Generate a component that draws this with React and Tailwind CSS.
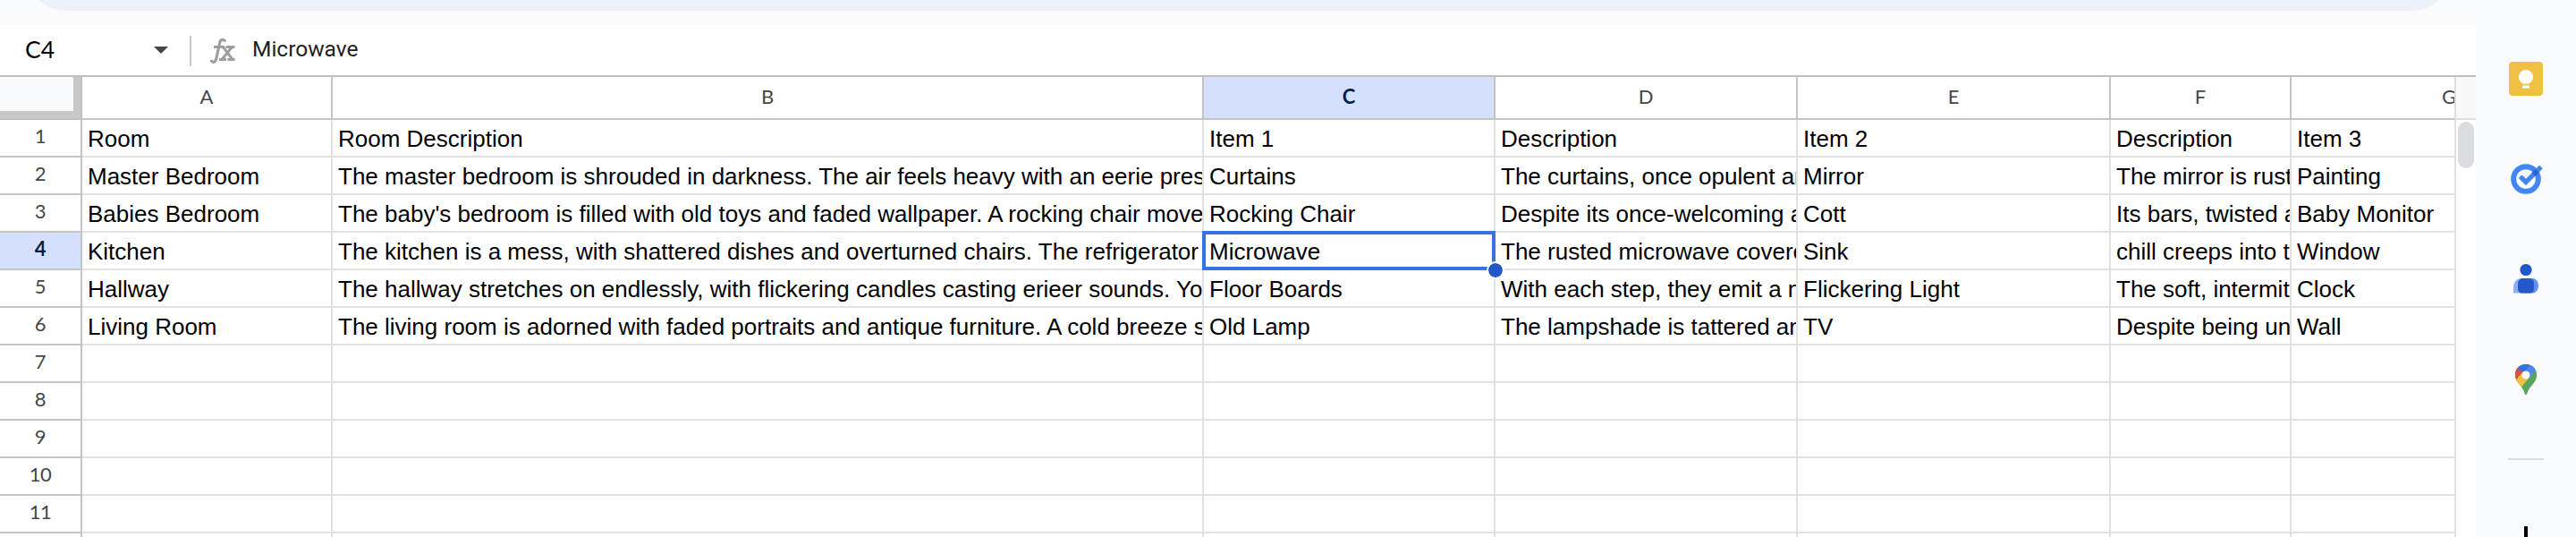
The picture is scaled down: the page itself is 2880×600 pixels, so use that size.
const columns = [
  { id: 'A', width: 'w-[280px]' },
  { id: 'B', width: 'w-[974px]' },
  { id: 'C', width: 'w-[326px]' },
  { id: 'D', width: 'w-[338px]' },
  { id: 'E', width: 'w-[350px]' },
  { id: 'F', width: 'w-[202px]' },
  { id: 'G', width: 'w-[182px]' },
];

const rows = [
  ['Room', 'Room Description', 'Item 1', 'Description', 'Item 2', 'Description', 'Item 3'],
  ['Master Bedroom', 'The master bedroom is shrouded in darkness. The air feels heavy with an eerie pres', 'Curtains', 'The curtains, once opulent an', 'Mirror', 'The mirror is rust', 'Painting'],
  ['Babies Bedroom', "The baby's bedroom is filled with old toys and faded wallpaper. A rocking chair move", 'Rocking Chair', 'Despite its once-welcoming a', 'Cott', 'Its bars, twisted a', 'Baby Monitor'],
  ['Kitchen', 'The kitchen is a mess, with shattered dishes and overturned chairs. The refrigerator', 'Microwave', 'The rusted microwave covere', 'Sink', 'chill creeps into t', 'Window'],
  ['Hallway', 'The hallway stretches on endlessly, with flickering candles casting erieer sounds. Yo', 'Floor Boards', 'With each step, they emit a n', 'Flickering Light', 'The soft, intermit', 'Clock'],
  ['Living Room', 'The living room is adorned with faded portraits and antique furniture. A cold breeze s', 'Old Lamp', 'The lampshade is tattered an', 'TV', 'Despite being un', 'Wall'],
  [], [], [], [], [], [],
];

function Cell({ col, text, selected }) {
  const edge = col.id === 'G' ? '' : 'border-r-2';
  return (
    <div className={`${col.width} ${edge} relative h-[42px] shrink-0 border-b-2 border-[#e1e1e1]`}>
      <div className="h-full overflow-hidden whitespace-pre pl-[6px] pt-[6px] text-[26px] leading-[30px]">{text}</div>
      {selected && (
        <>
          <div className="absolute -left-[2px] -top-[2px] z-10 h-[44px] w-[328px] border-4 border-[#3871e0]" />
          <div className="absolute left-[318px] top-[34px] z-20 size-4 rounded-full bg-[#2456cb] outline-2 outline-white" />
        </>
      )}
    </div>
  );
}

function KeepIcon() {
  return (
    <svg className="size-[38px] shrink-0" viewBox="0 0 38 38">
      <rect width="38" height="38" rx="4" fill="#f1bf42" />
      <circle cx="19" cy="17" r="8" fill="#fff" />
      <path d="M15 22h8v2h-8zM15 26.500h8v3.200h-8z" fill="#fff" />
    </svg>
  );
}

function TasksIcon() {
  return (
    <svg className="size-[40px] shrink-0" viewBox="0 0 40 40">
      <circle cx="20" cy="20" r="13.800" fill="none" stroke="#4285f4" strokeWidth="6" />
      <path d="M13.200 19l2.200-2.200L20 21.200 35.200 6l2.200 2.200L20 25.800z" fill="#4285f4" stroke="#4285f4" strokeWidth="2" strokeLinejoin="round" />
      <path d="M26.700 13l4.200-4.100 3.700 4.100-4.200 4.100z" fill="#2a63cf" />
    </svg>
  );
}

function ContactsIcon() {
  return (
    <svg className="size-[40px] shrink-0" viewBox="0 0 40 40">
      <circle cx="20" cy="10.500" r="6.600" fill="#2458c9" />
      <path d="M7 36.500a1 1 0 0 1-1-1V30c0-6 4-10 9-10h8v16.500z" fill="#8fadf8" />
      <path d="M18 20h9c4 0 7 3.500 7 8.200s-3 8.300-7 8.300h-9z" fill="#6690f7" />
      <path d="M17 20h7c3 0 5 2.500 5 5.500v6c0 3-2 5-5 5h-8c-3 0-5-2-5-5v-5c0-4 2-6.500 6-6.500z" fill="#2458c9" />
    </svg>
  );
}

function MapsIcon() {
  return (
    <svg className="h-[36px] w-[26px] shrink-0" viewBox="0 0 26 36">
      <defs>
        <clipPath id="pin">
          <path d="M13 1C6 1 1 6.300 1 13c0 4 1.700 6.800 4 9.700 3 3.700 5.600 6 6.700 10.600.3 1.200.6 1.700 1.300 1.700s1-.5 1.300-1.700C15.400 28.700 18 26.400 21 22.700c2.300-2.900 4-5.700 4-9.700C25 6.300 20 1 13 1z" />
        </clipPath>
      </defs>
      <g clipPath="url(#pin)">
        <rect width="26" height="36" fill="#58a55c" />
        <path d="M0 0h26v6L13 20 0 8z" fill="#5085ed" />
        <path d="M0 0h19L9.500 11.500 3 6z" fill="#3871e0" />
        <path d="M0 3l3.800 2.500L10 10.500 1.500 20 0 18z" fill="#d85140" />
        <path d="M1 19.500L10 9l12 1L7.500 27z" fill="#f1bf42" />
        <path d="M8 27L25 6v30H8z" fill="#58a55c" />
        <path d="M13 13L19.500 0 26 5 16 17z" fill="#5085ed" />
      </g>
      <circle cx="13" cy="13" r="4.500" fill="#fff" />
    </svg>
  );
}

export default function App() {
  return (
    <div className="flex h-[600px] w-[2880px] overflow-hidden bg-[#f9fbfd] font-['Liberation_Sans',sans-serif] text-black">
      <main className="flex w-[2768px] shrink-0 flex-col">
        <div className="h-7 shrink-0 pl-8">
          <div className="h-3 w-[2706px] overflow-hidden">
            <div className="-mt-[88px] h-[100px] rounded-[40px] bg-[#edf2fa]" />
          </div>
        </div>

        <div className="flex h-[58px] shrink-0 items-center border-b-2 border-[#c0c0c0] bg-white">
          <div className="w-[144px] pb-[3px] pl-7 font-['Lato',sans-serif] text-[26.5px] leading-8">C4</div>
          <svg className="ml-7 h-2 w-4" viewBox="0 0 16 8"><path d="M0 0h16L8 8z" fill="#444746" /></svg>
          <div className="ml-6 mt-[2px] h-[34px] w-[2px] bg-[#c7c7c7]" />
          <svg className="ml-[20px] mt-px h-[30px] w-[30px]" viewBox="0 0 30 30" fill="none" stroke="#9e9e9e">
            <path d="M17.500 4.800C17 2 13 1.200 11.800 5.200L7.800 23.500C6.800 28 3 28.500 2.200 25" strokeWidth="3.200" />
            <path d="M5 10.500h12M18.500 10.500h10M11 24.500h8M20.500 24.500h8" strokeWidth="3" />
            <path d="M15.500 10.500L26 24.500M25.500 10.500L14 24.500" strokeWidth="3" />
          </svg>
          <div className="ml-[18px] pb-[2px] font-['Roboto',sans-serif] text-[24.5px] leading-8 text-[#1f1f1f]">Microwave</div>
        </div>

        <div className="flex h-[48px] shrink-0 bg-white">
          <div className="h-full w-[92px] shrink-0 border-b-2 border-r-2 border-[#c0c0c0]">
            <div className="h-full border-b-8 border-r-8 border-[#c7c7c7] bg-[#f8f9fa]" />
          </div>
          {columns.map((col) => (
            <div
              key={col.id}
              className={`${col.width} ${col.id === 'G' ? 'pl-[168px]' : 'justify-center border-r-2'} ${col.id === 'C' ? 'bg-[#d5e1fc] font-bold text-[#041e49]' : 'text-[#444746]'} flex h-full shrink-0 overflow-hidden border-b-2 border-[#c4c4c4] pt-[6px] font-['Lato',sans-serif] text-[22px] leading-8`}
            >
              <span>{col.id}</span>
            </div>
          ))}
          <div className="h-full w-6 border-b-2 border-l-2 border-[#dedede] bg-[#f8f8f8]" />
        </div>

        <div className="flex bg-white">
          <div className="w-[2744px]">
            {rows.map((row, r) => (
              <div key={r} className="flex">
                <div className={`${r === 3 ? 'bg-[#d5e1fc] font-bold text-[#041e49]' : 'text-[#444746]'} h-[42px] w-[92px] shrink-0 border-b-2 border-r-2 border-[#c4c4c4] pt-[2px] text-center font-['Lato',sans-serif] text-[22px] leading-8 tracking-[-0.5px]`}>
                  {r + 1}
                </div>
                {columns.map((col, c) => (
                  <Cell key={col.id} col={col} text={row[c]} selected={r === 3 && c === 2} />
                ))}
              </div>
            ))}
          </div>
          <div className="w-6 border-l-2 border-[#e1e1e1] px-[2px] pt-[2px]">
            <div className="h-[52px] rounded-full bg-[#dadce0]" />
          </div>
        </div>
      </main>

      <aside className="flex w-[112px] flex-col items-center pt-[69px]">
        <KeepIcon />
        <div className="mt-[73px] h-[40px] shrink-0"><TasksIcon /></div>
        <div className="mt-[71px] h-[40px] shrink-0"><ContactsIcon /></div>
        <div className="mt-[75px] h-[36px] shrink-0"><MapsIcon /></div>
        <div className="mt-[70px] h-[2px] w-10 shrink-0 bg-[#dadce0]" />
        <svg className="mt-[74px] size-[28px] shrink-0" viewBox="0 0 28 28"><path d="M12 0h4v12h12v4H16v12h-4V16H0v-4h12z" fill="#000" /></svg>
      </aside>
    </div>
  );
}
